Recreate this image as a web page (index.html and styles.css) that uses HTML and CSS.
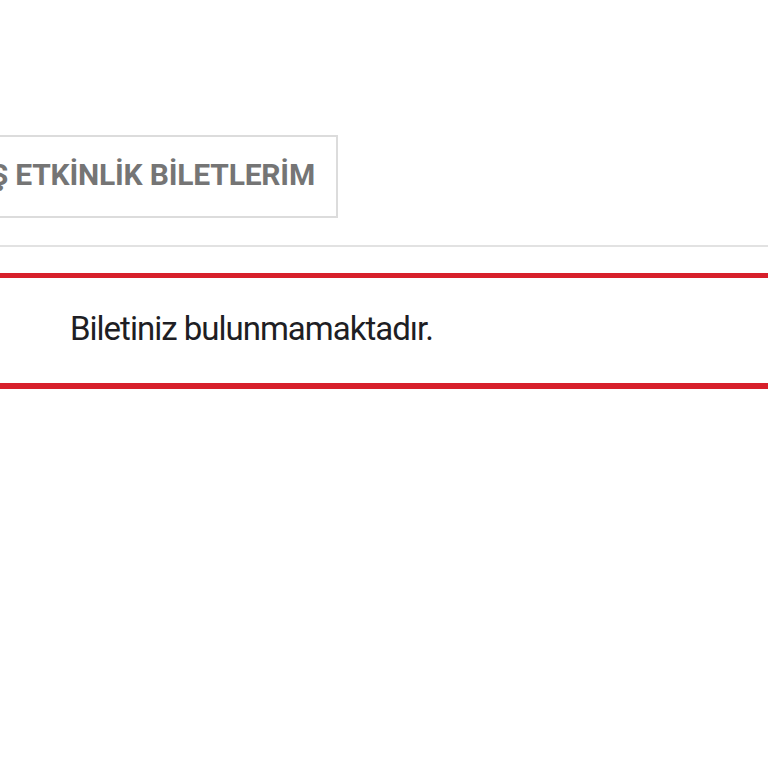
FILE: index.html
```html
<!DOCTYPE html>
<html lang="tr">
<head>
<meta charset="utf-8">
<link rel="stylesheet" href="styles.css">
<title>Biletlerim</title>
</head>
<body>
<div class="tabs">
  <div class="tab-wrap">
    <button class="tab">GEÇMİŞ ETKİNLİK BİLETLERİM</button>
  </div>
</div>
<div class="alert">
  <p class="alert-text">Biletiniz bulunmamaktadır.</p>
</div>
</body>
</html>
```
FILE: styles.css
```css
html, body {
  margin: 0;
  padding: 0;
  background: #ffffff;
  overflow: hidden;
}
body {
  width: 768px;
  height: 768px;
}
.tabs {
  padding-top: 135px;
  padding-bottom: 27px;
  border-bottom: 2px solid #e2e2e2;
}
.tab-wrap {
  width: 338px;
  display: flex;
  justify-content: flex-end;
}
.tab {
  flex: none;
  height: 83px;
  padding: 0 21px 5px 30px;
  background: #fff;
  border: 2px solid #dcdcdc;
  font-family: Roboto, "Liberation Sans", sans-serif;
  font-weight: 700;
  font-size: 30px;
  color: #757575;
  white-space: nowrap;
  letter-spacing: -0.2px;
}
.alert {
  margin: 26px -20px 0;
  border-top: 5px solid #d7202b;
  border-bottom: 6px solid #d7202b;
  height: 105px;
  display: flex;
  align-items: center;
  padding-left: 90px;
  padding-bottom: 4px;
  box-sizing: border-box;
  height: 116px;
}
.alert-text {
  margin: 0;
  font-family: Roboto, "Liberation Sans", sans-serif;
  font-size: 33px;
  letter-spacing: -1px;
  color: #1e1e24;
}
```
